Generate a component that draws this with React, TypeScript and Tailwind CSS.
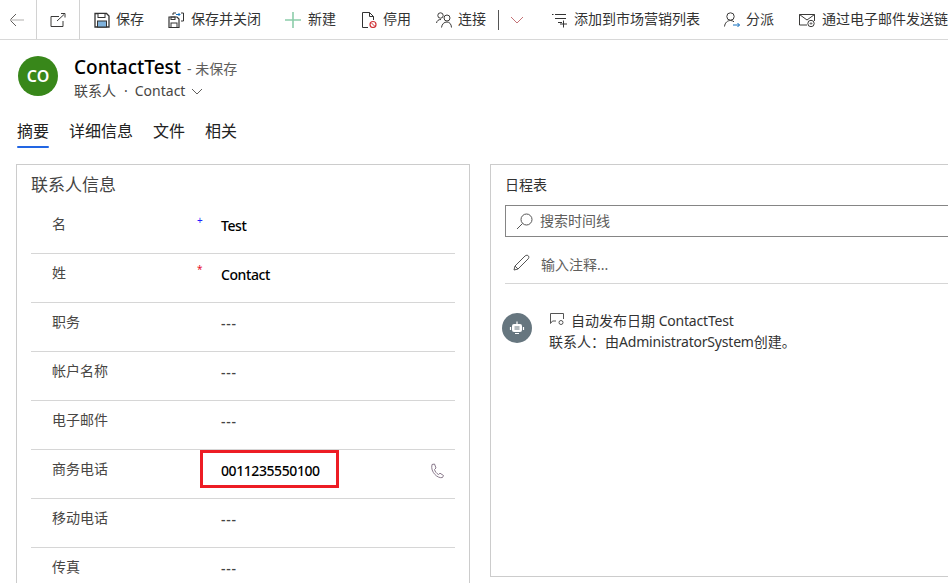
import type { ReactNode } from "react";

const FONT = "font-['Noto_Sans','Noto_Sans_CJK_SC',sans-serif]";

function Ico({ children, w = 16, h = 16 }: { children: ReactNode; w?: number; h?: number }) {
  return (
    <svg width={w} height={h} viewBox={`0 0 ${w} ${h}`} fill="none" stroke="#3b3a39" strokeWidth="1" className="shrink-0">
      {children}
    </svg>
  );
}

function ToolItem({ icon, label, gap, left }: { icon: ReactNode; label: string; gap: string; left: string }) {
  return (
    <div className={`flex items-center shrink-0 ${gap} ${left}`}>
      {icon}
      <span className="mb-[2px] text-[14px] leading-[18px] text-[#333] whitespace-nowrap">{label}</span>
    </div>
  );
}

function Toolbar() {
  return (
    <div className="flex items-center h-10 border-b border-[#d8d8d8] shrink-0 overflow-hidden">
      <div className="flex items-center justify-center w-[37px] h-full border-r border-[#d2d2d2] shrink-0">
        <svg width="15" height="14" viewBox="0 0 15 14" fill="none" className="-ml-[4px]">
          <path d="M7 1 L1 7 L7 13" stroke="#605e5c" />
          <path d="M1 7 H15" stroke="#c8c6c4" strokeWidth="1.4" />
        </svg>
      </div>
      <div className="flex items-center justify-center w-[43px] h-full border-r border-[#d2d2d2] shrink-0">
        <Ico>
          <path d="M9 4.5 H1 V14.5 H13 V9" stroke="#3b3a39" />
          <path d="M7 9 L14 2.5 M11 1.5 H15 V5.5" stroke="#3b3a39" />
        </Ico>
      </div>
      <ToolItem
        left="ml-[14px]"
        gap="gap-[6px]"
        label="保存"
        icon={
          <Ico>
            <path d="M1 1.5 H12.5 L15 4 V15 H1 Z" fill="#fff" stroke="#333" strokeWidth="1.3" />
            <rect x="3.5" y="9" width="9" height="6" fill="#7fb2dc" stroke="#333" />
            <rect x="4" y="1.5" width="7" height="4" fill="#fff" stroke="#333" />
          </Ico>
        }
      />
      <ToolItem
        left="ml-[24px]"
        gap="gap-[7px]"
        label="保存并关闭"
        icon={
          <Ico>
            <path d="M1 5 H9 L11 7 V15.5 H1 Z" stroke="#333" strokeWidth="1.2" />
            <rect x="3" y="11" width="6" height="4.5" stroke="#333" />
            <rect x="3" y="5" width="4" height="2.5" stroke="#333" />
            <path d="M5 3 V1 H8 M13 1 H15.5 V9 H13" stroke="#333" />
            <path d="M8 2.5 H12 M10.5 1 L12 2.5 L10.5 4" stroke="#106ebe" />
          </Ico>
        }
      />
      <ToolItem
        left="ml-[24px]"
        gap="gap-[7px]"
        label="新建"
        icon={
          <Ico>
            <path d="M8 0 V16 M0 8 H16" stroke="#8ccdaa" strokeWidth="1.6" />
          </Ico>
        }
      />
      <ToolItem
        left="ml-[25px]"
        gap="gap-[6px]"
        label="停用"
        icon={
          <Ico>
            <path d="M7 15.5 H1.5 V0.5 H8.5 L12.5 4.5 V8 M8.5 0.5 V4.5 H12.5" stroke="#333" />
            <circle cx="12" cy="12.5" r="3" stroke="#d13438" strokeWidth="1.2" />
            <path d="M10 10.5 L14 14.5" stroke="#d13438" />
          </Ico>
        }
      />
      <ToolItem
        left="ml-[25px]"
        gap="gap-[6px]"
        label="连接"
        icon={
          <Ico>
            <circle cx="4.5" cy="3.5" r="2.7" />
            <circle cx="11" cy="6" r="3" />
            <path d="M0.5 11 C1 8.5 2.5 7.5 5 7.5 M5.5 15.5 C6 12 8 10 11 10 C13.5 10 15.3 12 15.5 15.5" />
          </Ico>
        }
      />
      <div className="ml-[12px] w-px h-[20px] bg-[#555] shrink-0" />
      <svg width="14" height="8" viewBox="0 0 14 8" fill="none" className="ml-[11px] shrink-0">
        <path d="M1 1 L7 7 L13 1" stroke="#a4262c" strokeOpacity="0.65" />
      </svg>
      <ToolItem
        left="ml-[27px]"
        gap="gap-[7px]"
        label="添加到市场营销列表"
        icon={
          <Ico>
            <path d="M1 2.5 H2.5 M4 2.5 H15 M4 6.5 H15 M7 10.5 H11" stroke="#333" />
            <path d="M12.5 8.5 V15.5 M9 12 H16" stroke="#333" />
          </Ico>
        }
      />
      <ToolItem
        left="ml-[24px]"
        gap="gap-[6px]"
        label="分派"
        icon={
          <Ico>
            <circle cx="6.5" cy="4.5" r="3.7" />
            <path d="M0.5 14.5 C1 10.5 3.5 8.5 6.5 8.5 C8 8.5 9 9 10 9.8" />
            <path d="M9 13 H15.5 M13.5 11 L15.5 13 L13.5 15" stroke="#106ebe" />
          </Ico>
        }
      />
      <ToolItem
        left="ml-[25px]"
        gap="gap-[7px]"
        label="通过电子邮件发送链接"
        icon={
          <Ico>
            <path d="M8 13 H0.5 V2.5 H15.5 V9" />
            <path d="M0.5 2.5 L8 8 L15.5 2.5" />
            <circle cx="12" cy="11.5" r="3.2" />
            <path d="M12 10 V13 M10.5 11.5 H13.5" strokeOpacity="0.6" />
          </Ico>
        }
      />
    </div>
  );
}

function Header() {
  return (
    <div className="flex pl-[18px] pt-4 shrink-0">
      <div className="w-10 h-10 rounded-full bg-[#38871a] flex items-center justify-center text-white text-[16px] font-semibold shrink-0">
        CO
      </div>
      <div className="ml-4 -mt-[2px]">
        <div className="flex items-baseline">
          <span className="text-[19px] leading-[26px] font-medium text-black">ContactTest</span>
          <span className="ml-[6px] text-[14px] text-[#605e5c]">- 未保存</span>
        </div>
        <div className="flex items-center text-[14px] leading-[18px] text-[#484644] mt-[2px]">
          <span>联系人</span>
          <span className="ml-[8px] mr-[7px]">·</span>
          <span>Contact</span>
          <svg width="12" height="7" viewBox="0 0 12 7" fill="none" className="ml-[6px]">
            <path d="M1 1 L6 6 L11 1" stroke="#605e5c" />
          </svg>
        </div>
      </div>
    </div>
  );
}

function Tabs() {
  const tabs = ["摘要", "详细信息", "文件", "相关"];
  return (
    <div className="flex gap-[20px] pl-[17px] mt-[20px] shrink-0">
      {tabs.map((t, i) => (
        <div key={t} className="flex flex-col">
          <span className="text-[16px] leading-[22px] text-[#222] whitespace-nowrap">{t}</span>
          <div className={`h-[2px] mt-[4px] rounded-sm ${i === 0 ? "bg-[#2266e3]" : ""}`} />
        </div>
      ))}
    </div>
  );
}

function Row({ label, value, mark, last, bold, children }: {
  label: string;
  value: string;
  mark?: "rec" | "req";
  last?: boolean;
  bold?: boolean;
  children?: ReactNode;
}) {
  return (
    <div className={`relative flex h-[49px] shrink-0 ${last ? "" : "border-b border-[#d6d6d6]"}`}>
      <span className="ml-[21px] mt-[9px] w-[145px] text-[14px] leading-[20px] text-[#484644]">{label}</span>
      <span className="w-[24px] mt-[8px] text-[10px] leading-[14px]">
        {mark === "rec" && <span className="text-[#2020ff]">+</span>}
        {mark === "req" && <span className="text-[#e8112d]">*</span>}
      </span>
      <span className={`mt-[11px] text-[14px] leading-[20px] font-medium ${bold ? "tracking-[-0.42px] text-black" : "tracking-[0.8px] text-[#444]"}`}>{value}</span>
      {children}
    </div>
  );
}

function ContactCard() {
  return (
    <div className="w-[454px] shrink-0 border border-[#cccccc] border-b-0 px-[14px] pt-[9px]">
      <div className="text-[17px] leading-[22px] text-[#444] mb-[9px]">联系人信息</div>
      <Row label="名" value="Test" mark="rec" bold />
      <Row label="姓" value="Contact" mark="req" bold />
      <Row label="职务" value="---" />
      <Row label="帐户名称" value="---" />
      <Row label="电子邮件" value="---" />
      <Row label="商务电话" value="0011235550100" bold>
        <div className="absolute left-[169px] top-0 w-[139px] h-[38px] border-[3px] border-[#ed1c24]" />
        <svg width="16" height="16" viewBox="0 0 16 16" fill="none" className="absolute right-[10px] top-[13px]">
          <path d="M3 1.5 L5.5 1 L7 5 L5.5 6.5 C6 8.5 7.5 10.5 9.5 11.5 L11 10.2 L14.5 12.5 L13.5 14.5 C9 16 1 9 3 1.5 Z" stroke="#8a7a8c" />
        </svg>
      </Row>
      <Row label="移动电话" value="---" />
      <Row label="传真" value="---" last />
    </div>
  );
}

function TimelineCard() {
  return (
    <div className="ml-5 w-[520px] h-[413px] shrink-0 border border-[#cccccc] pl-[14px]">
      <div className="mt-[10px] mb-[10px] text-[14px] leading-[20px] text-[#333]">日程表</div>
      <div className="h-[32px] border border-[#858585] flex items-center pl-[10px]">
        <svg width="17" height="17" viewBox="0 0 17 17" fill="none">
          <circle cx="10.5" cy="6.5" r="5.5" stroke="#555" />
          <path d="M6.5 10.5 L1 16" stroke="#555" />
        </svg>
        <span className="ml-[7px] mb-[2px] text-[14px] text-[#605e5c]">搜索时间线</span>
      </div>
      <div className="h-[47px] border-b border-[#d6d6d6] flex items-center pl-[8px] pt-[8px]">
        <svg width="17" height="17" viewBox="0 0 17 17" fill="none" className="-mt-[3px]">
          <path d="M1 16 L2 12 L12 2 C13 1 15 1 15.5 2 C16 3 16 4 15 5 L5 15 Z M2 12 L5 15" stroke="#555" />
        </svg>
        <span className="ml-[11px] text-[14px] text-[#605e5c]">输入注释...</span>
      </div>
      <div className="flex mt-[29px] -ml-[3px]">
        <div className="w-[30px] h-[30px] rounded-full bg-[#66767f] flex items-center justify-center shrink-0">
          <svg width="16" height="16" viewBox="0 0 16 16" fill="none">
            <rect x="3" y="4" width="10" height="8" rx="2" fill="#fff" />
            <path d="M8 1.5 V4 M6 13.5 H10 M1.5 7 V10 M14.5 7 V10" stroke="#fff" strokeWidth="1.2" />
            <path d="M5.5 7 H10.5 M5.5 9 H10.5" stroke="#66767f" />
          </svg>
        </div>
        <div className="ml-[17px] -mt-[3px] text-[14px] leading-[21px] text-[#333]">
          <div className="flex items-center">
            <svg width="15" height="14" viewBox="0 0 15 14" fill="none" className="-mt-[3px]">
              <path d="M7 9 H3.5 L1.5 11.5 V1.5 H14.5 V7" stroke="#555" />
              <circle cx="12" cy="10.5" r="2" stroke="#555" />
            </svg>
            <span className="ml-[7px]">自动发布日期 <span className="tracking-[-0.2px]">ContactTest</span></span>
          </div>
          <div>联系人：由<span className="tracking-[-0.2px]">AdministratorSystem</span>创建。</div>
        </div>
      </div>
    </div>
  );
}

export default function App() {
  return (
    <div className={`w-[948px] h-[583px] overflow-hidden bg-white flex flex-col ${FONT}`}>
      <Toolbar />
      <Header />
      <Tabs />
      <div className="flex pl-4 mt-[16px]">
        <ContactCard />
        <TimelineCard />
      </div>
    </div>
  );
}
